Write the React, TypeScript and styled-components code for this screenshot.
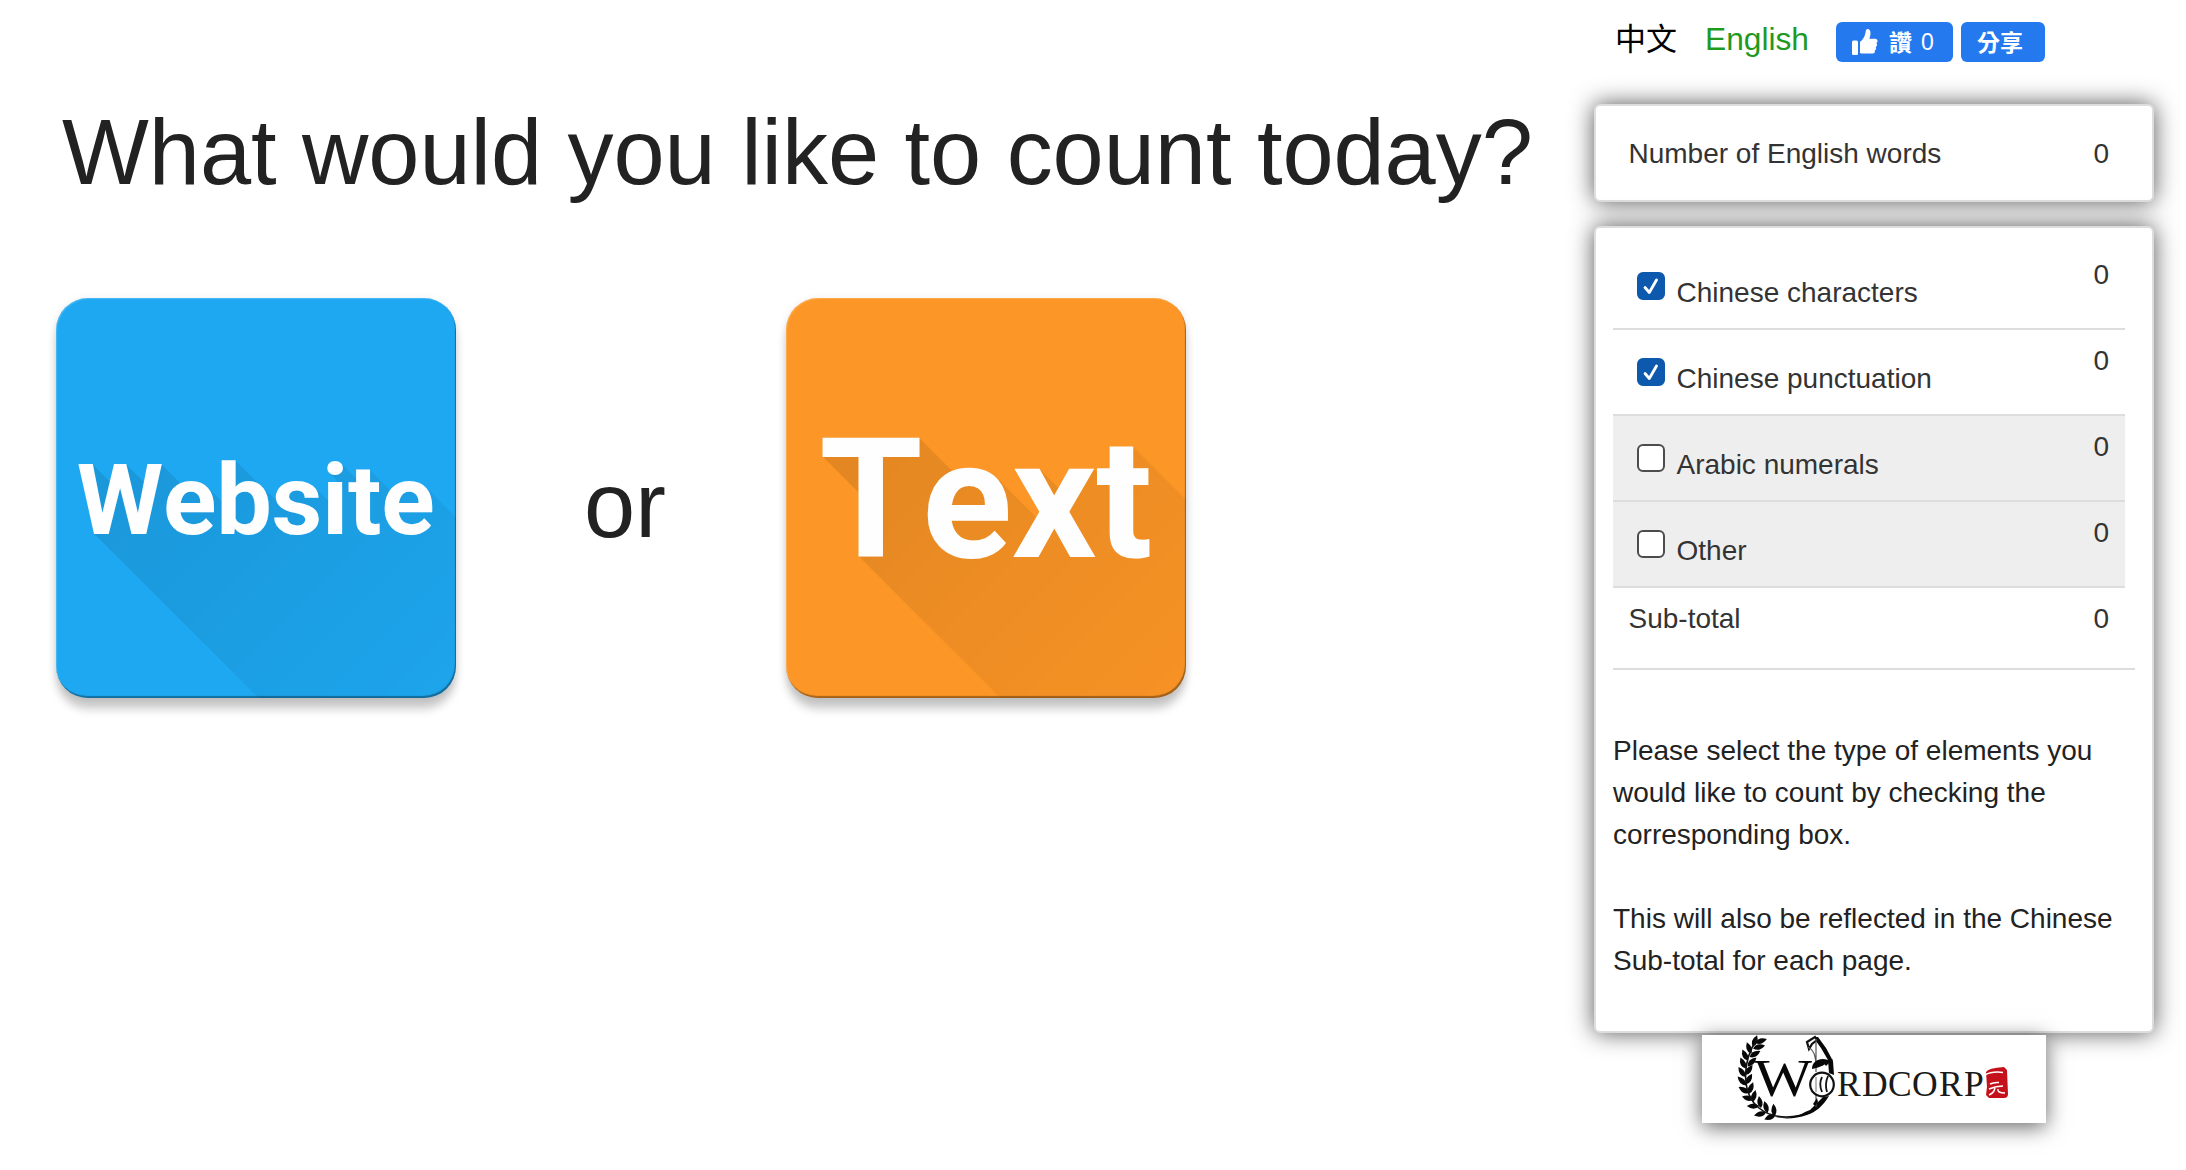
import React from "react";
import styled, { createGlobalStyle, css } from "styled-components";

const sans = `"Liberation Sans", Arial, "Noto Sans CJK TC", sans-serif`;

const GlobalStyle = createGlobalStyle`
  * { box-sizing: border-box; }
  body { margin: 0; background: #fff; overflow: hidden; font-family: ${sans}; color: #222; }
`;

const Page = styled.div`
  display: flex;
  width: 2186px;
  height: 1170px;
  overflow: hidden;
`;

const Main = styled.main`
  width: 1594px;
  padding: 92px 0 0 56px;
`;

const Title = styled.h1`
  margin: 0;
  padding-left: 6px;
  font-size: 92px;
  line-height: 120px;
  letter-spacing: -0.06px;
  font-weight: 400;
  white-space: nowrap;
`;

const Choices = styled.div`
  display: flex;
  margin-top: 86px;
`;

const longShadow = Array.from({ length: 330 }, (_, i) => `${i + 1}px ${i + 1}px 0 #000`).join(",");

const labelBox = css`
  display: flex;
  align-items: center;
  justify-content: center;
  font-family: Roboto, sans-serif;
  font-weight: 700;
  font-kerning: none;
  line-height: 1;
`;

const Tile = styled.button<{ $color: string; $size: number; $spacing: number }>`
  position: relative;
  width: 400px;
  height: 400px;
  border: 0;
  border-radius: 32px;
  padding: 4px 1px 0 0;
  background: ${(p) => p.$color};
  color: #fefefe;
  font-size: ${(p) => p.$size}px;
  letter-spacing: ${(p) => p.$spacing}px;
  box-shadow: 0 12px 10px -1px rgba(0, 0, 0, 0.2), 0 2px 10px rgba(0, 0, 0, 0.1);
  ${labelBox}

  &::before {
    content: attr(data-label);
    position: absolute;
    inset: 0;
    padding: inherit;
    border-radius: inherit;
    overflow: hidden;
    color: #000;
    text-shadow: ${longShadow};
    mask-image: linear-gradient(135deg, rgba(0, 0, 0, 0.095) 30%, rgba(0, 0, 0, 0.02) 100%);
    ${labelBox}
  }

  &::after {
    content: "";
    position: absolute;
    inset: 0;
    border-radius: inherit;
    box-shadow: inset -1px -2px 1px rgba(0, 0, 0, 0.35), inset 1px 1px 1px rgba(255, 255, 255, 0.2);
  }
`;

const TileText = styled.span`
  position: relative;
`;

const Or = styled.span`
  width: 330px;
  padding-top: 147px;
  padding-left: 8px;
  text-align: center;
  font-size: 92px;
  line-height: 120px;
`;

const Side = styled.aside`
  width: 560px;
`;

const TopBar = styled.div`
  display: flex;
  align-items: flex-start;
  height: 104px;
  padding: 22px 0 0 21px;
`;

const Lang = styled.a<{ $active?: boolean }>`
  width: ${(p) => (p.$active ? 131 : 90)}px;
  padding-top: ${(p) => (p.$active ? 0 : 1)}px;
  font-size: ${(p) => (p.$active ? 31.7 : 31)}px;
  line-height: 34px;
  color: ${(p) => (p.$active ? "#1f9a1f" : "#000")};
`;

const FbButton = styled.button<{ $width: number }>`
  display: flex;
  align-items: center;
  width: ${(p) => p.$width}px;
  height: 40px;
  margin-right: 8px;
  padding: 0 0 0 16px;
  border: 0;
  border-radius: 6px;
  background: #2479ef;
  color: #fff;
  font: 700 23px/38px "Noto Sans CJK TC", sans-serif;
`;

const LikeWord = styled.span`
  width: 43px;
  height: 40px;
  padding-left: 11px;
  text-align: left;
`;

const Count = styled.span`
  font: 400 23px/42px ${sans};
`;

const ShareWord = styled.span`
  height: 40px;
`;

const Card = styled.section<{ $height: number; $top: number }>`
  height: ${(p) => p.$height}px;
  margin-bottom: 24px;
  padding: ${(p) => p.$top}px 0 0 17px;
  border: 2px solid #ddd;
  border-radius: 6px;
  background: #fff;
  box-shadow: 0 0 23px #555;
`;

const Line = styled.div<{ $muted?: boolean; $rule?: boolean; $height: number }>`
  display: flex;
  justify-content: space-between;
  width: 512px;
  height: ${(p) => p.$height}px;
  padding: 15px 16px 0 15.5px;
  font-size: 28px;
  line-height: 32px;
  color: #333;
  background: ${(p) => (p.$muted ? "#eee" : "transparent")};
  border-bottom: ${(p) => (p.$rule ? "2px solid #ddd" : "0")};
`;

const Option = styled.label`
  display: flex;
  gap: 11.5px;
  padding: 18px 0 0 8.5px;
`;

const Box = styled.span<{ $on: boolean }>`
  display: flex;
  width: 28px;
  height: 28px;
  margin-top: -5px;
  border: 2px solid ${(p) => (p.$on ? "#0d59ad" : "#4c4c4c")};
  border-radius: 6px;
  background: ${(p) => (p.$on ? "#0d59ad" : "#fff")};
`;

const Rule = styled.hr`
  width: 522px;
  height: 2px;
  margin: 0;
  border: 0;
  background: #ddd;
`;

const HelpBlock = styled.div`
  padding-top: 60px;
`;

const Help = styled.p`
  margin: 0 0 42px;
  font-size: 28px;
  line-height: 42px;
  white-space: nowrap;
`;

const LogoLink = styled.a`
  position: relative;
  display: block;
  width: 344px;
  height: 88px;
  margin: -22px 0 0 108px;
  background: #fff;
  box-shadow: 0 4px 20px rgba(0, 0, 0, 0.6);
`;

const Check = () => (
  <svg width="24" height="24" viewBox="0 0 24 24" fill="none" stroke="#fff" strokeWidth="2.8" strokeLinecap="round" strokeLinejoin="round">
    <path d="M6 13.500 L10.300 18.500 L17.500 6" />
  </svg>
);

const Thumb = () => (
  <svg width="26" height="26" viewBox="0 0 26 26" fill="#fff">
    <rect x="0" y="11.500" width="6" height="14.500" rx="1.500" />
    <path d="M8 24V13c3-2.400 5-5.800 5.500-9.500C13.700 1 14.600 0 15.600 0c1.900 0 2.900 1.800 2.900 4.200 0 1.700-.5 3.700-1.200 5.600h6c1.300 0 2.200 1 2.200 2.200 0 .9-.5 1.700-1.200 2.100.5.400.7 1 .7 1.600 0 1.100-.6 1.900-1.400 2.200.3.400.5.900.5 1.500 0 1.100-.6 1.800-1.500 2.100.2.300.3.700.3 1.100 0 1.200-.9 2-2.100 2H11c-1.200 0-2.200-.1-3-.6z" />
  </svg>
);

const leaves: [number, number, number][] = [
  [53, 6, -70], [59, 6, -20], [47, 13, -110], [57, 12, -15], [43, 20, -115], [53, 19, -30],
  [41, 28, -115], [50, 27, -45], [40, 37, -125], [47, 35, -55], [40, 46, -135], [47, 44, -60],
  [42, 55, -150], [49, 53, -70], [46, 63, -165], [52, 61, -75], [51, 71, -180], [58, 67, -100],
  [58, 79, -195], [64, 72, -105], [68, 82, -205], [72, 75, -95],
];

const initials: [string, number][] = [
  ["R", 135], ["D", 160], ["C", 186], ["O", 210], ["R", 237], ["P", 262],
];

const Logo = () => (
  <svg width="344" height="88" viewBox="0 0 344 88">
    {leaves.map(([x, y, r], i) => (
      <path key={i} d="M-6.200 0Q-1-5.400 6.200 0Q-1 5-6.200 0Z" transform={`translate(${x} ${y}) rotate(${r})`} fill="#080808" />
    ))}
    <path d="M55 4C39 28 40 59 57 73C73 86 96 83 110 76" fill="none" stroke="#111" strokeWidth="1.600" />
    <path d="M72 81.500C84 84 96 82 103 77L108 75 121 62 127 61C121 71 114 77 105 80 94 84 80 84.500 72 81.500Z" fill="#080808" />
    <path d="M111 2L116 2 124 13 131 26 132 40 127 38 126 25 119 13Z" fill="#080808" />
    <path d="M105 7L113 2 115 5 110 9 107 14Z" fill="#fff" stroke="#111" strokeWidth="2.200" />
    <path d="M106 12C112 15 113 20 114 28M114 4V37M114 59V72" fill="none" stroke="#555" strokeWidth="1.200" />
    <path d="M110 34C110 26 118 22 126 25C124 30 119 32 110 34ZM120 26L131 24 124 31Z" fill="#080808" />
    <path d="M115 63L111 69 113 71 116 67Z" fill="#080808" />
    <circle cx="120" cy="49.500" r="11.800" fill="#fff" stroke="#111" strokeWidth="2.200" />
    <path d="M120 42Q116.500 49 120 57M126 41Q122.500 49 125 57" fill="none" stroke="#111" strokeWidth="1.800" />
    <path d="M114 42V57" stroke="#777" strokeWidth="1" />
    <text x="52" y="60.500" fontFamily="Liberation Serif, serif" fontSize="52" textLength="58" lengthAdjust="spacingAndGlyphs" fill="#080808">W</text>
    <text x={initials.map(([, x]) => x).join(" ")} y="61" fontFamily="Liberation Serif, serif" fontSize="35.500" fill="#1a1a1a">
      {initials.map(([letter]) => letter).join("")}
    </text>
    <path d="M284 37Q286 33 302 32L305 35 306 59Q306 63 302 63L287 63 284 60 285 52Z" fill="#c4111b" />
    <path d="M283 40Q290 36 301 37.500M288 49Q292 47 297 47.500M287 54Q294 51 301 51M287 60Q292 58 293 53M296 54Q295 58 303 58" fill="none" stroke="#fff" strokeWidth="1.500" />
  </svg>
);

const options = [
  { label: "Chinese characters", on: true },
  { label: "Chinese punctuation", on: true },
  { label: "Arabic numerals", on: false },
  { label: "Other", on: false },
];

export default function App() {
  return (
    <Page>
      <GlobalStyle />
      <Main>
        <Title>What would you like to count today?</Title>
        <Choices>
          <Tile data-label="Website" $color="#1ea8f1" $size={99} $spacing={-0.3}>
            <TileText>Website</TileText>
          </Tile>
          <Or>or</Or>
          <Tile data-label="Text" $color="#fc9626" $size={167} $spacing={-0.6}>
            <TileText>Text</TileText>
          </Tile>
        </Choices>
      </Main>
      <Side>
        <TopBar>
          <Lang>中文</Lang>
          <Lang $active>English</Lang>
          <FbButton $width={117}>
            <Thumb />
            <LikeWord>讚</LikeWord>
            <Count>0</Count>
          </FbButton>
          <FbButton $width={84}>
            <ShareWord>分享</ShareWord>
          </FbButton>
        </TopBar>
        <Card $height={98} $top={17}>
          <Line $height={56}>
            <span>Number of English words</span>
            <span>0</span>
          </Line>
        </Card>
        <Card $height={807} $top={16}>
          {options.map((o) => (
            <Line key={o.label} $height={86} $muted={!o.on} $rule>
              <Option>
                <Box $on={o.on}>{o.on && <Check />}</Box>
                {o.label}
              </Option>
              <span>0</span>
            </Line>
          ))}
          <Line $height={80}>
            <span>Sub-total</span>
            <span>0</span>
          </Line>
          <Rule />
          <HelpBlock>
            <Help>
              Please select the type of elements you
              <br />
              would like to count by checking the
              <br />
              corresponding box.
            </Help>
            <Help>
              This will also be reflected in the Chinese
              <br />
              Sub-total for each page.
            </Help>
          </HelpBlock>
        </Card>
        <LogoLink>
          <Logo />
        </LogoLink>
      </Side>
    </Page>
  );
}
